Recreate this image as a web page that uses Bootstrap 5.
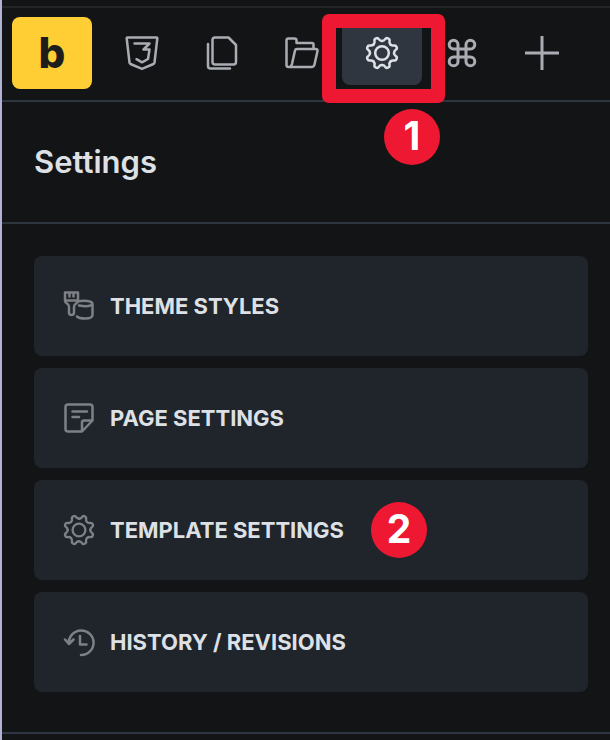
<!DOCTYPE html>
<html lang="en">
<head>
<meta charset="utf-8">
<meta name="viewport" content="width=device-width, initial-scale=1">
<title>Settings</title>
<link href="https://cdn.jsdelivr.net/npm/bootstrap@5.3.0/dist/css/bootstrap.min.css" rel="stylesheet">
<style>
  body { background: #131415; color: #dde1e5; font-family: Inter, "Liberation Sans", sans-serif; }
  .builder { border-left: 2px solid #b0b1d3; }
  .top-strip { height: 8px; border-bottom: 2px solid #242526; }
  .toolbar { padding: 9px 10px 11px; border-bottom: 2px solid #2d353e; }
  .brand { width: 80px; height: 72px; margin-right: 10px; border-radius: 8px; background: #ffcd34; color: #1d1d1b; font-size: 42px; font-weight: 800; line-height: 72px; }
  .tool { width: 80px; height: 64px; border-radius: 8px; color: #a9acb2; }
  .tool.active { background: #303640; color: #dde1e5; }
  .icon { fill: none; stroke: currentColor; stroke-width: 2.5; stroke-linecap: round; stroke-linejoin: round; overflow: visible; }
  .icon.heavy { stroke-width: 3; }
  .frame { inset: -7px -23px -18px -20px; border: 14px solid #ee1832; border-radius: 7px; z-index: 1; pointer-events: none; }
  .step { width: 56px; height: 56px; background: #ee1832; color: #fff; font-size: 39px; font-weight: 700; line-height: 54px; }
  .step-one { top: 88px; left: 42px; z-index: 2; }
  .heading { padding: 40px 32px; border-bottom: 2px solid #2d353e; }
  .heading h1 { font-size: 31px; font-weight: 600; line-height: 40px; }
  .options { padding: 32px 22px 40px 32px; gap: 12px; border-bottom: 2px solid #2f3542; }
  .option { height: 100px; padding: 0 29px; gap: 15px; border-radius: 8px; background: #20242b; color: #dde1e5; font-size: 22px; font-weight: 700; }
  .option .icon { color: #7d8186; }
  .option .step { margin-left: 12px; }
</style>
<script src="https://cdn.jsdelivr.net/npm/bootstrap@5.3.0/dist/js/bootstrap.bundle.min.js"></script>
</head>
<body>
<svg class="d-none" aria-hidden="true">
  <defs>
    <path id="tooth" d="M0-12C4.2-12 2.35-16.1 6.05-14.6C9.75-13.1 5.5-11.5 8.5-8.5"/>
    <symbol id="gear" viewBox="-17 -17 34 34" overflow="visible">
      <circle r="6.8"/>
      <use href="#tooth"/><use href="#tooth" transform="rotate(45)"/><use href="#tooth" transform="rotate(90)"/><use href="#tooth" transform="rotate(135)"/>
      <use href="#tooth" transform="rotate(180)"/><use href="#tooth" transform="rotate(225)"/><use href="#tooth" transform="rotate(270)"/><use href="#tooth" transform="rotate(315)"/>
    </symbol>
  </defs>
</svg>
<div class="builder min-vh-100">
  <div class="top-strip"></div>
  <header class="toolbar d-flex align-items-center">
    <a class="brand text-center text-decoration-none flex-shrink-0" href="#" aria-label="Builder home">b</a>
    <button class="tool btn border-0 p-0 d-flex align-items-center justify-content-center" aria-label="CSS">
      <svg class="icon" width="34" height="34"><path d="M2.500 1.500H31.500Q32.500 1.500 32.300 2.500L29.500 26.500Q29.500 27.500 28.500 28L17.500 32.700H16.500L5.500 28Q4.500 27.500 4.500 26.500L1.700 2.500Q1.500 1.500 2.500 1.500ZM9.500 7.500H24.500L18.500 13.500H24.500L23 23L17 26.300L11.500 23.200"/></svg>
    </button>
    <button class="tool btn border-0 p-0 d-flex align-items-center justify-content-center" aria-label="Pages">
      <svg class="icon" width="34" height="34"><path d="M10 1.500H23.500L31 9V26Q31 28.500 28.500 28.500H10Q7.500 28.500 7.500 26V4Q7.500 1.500 10 1.500ZM3 8V30Q3 32.500 5.500 32.500H25"/></svg>
    </button>
    <button class="tool btn border-0 p-0 d-flex align-items-center justify-content-center" aria-label="Open folder">
      <svg class="icon" width="34" height="34"><path d="M6 31H3.500Q1.500 31 1.500 29V4.500Q1.500 2.500 3.500 2.500H9.500Q11.500 2.500 11.500 4.500V7H27Q28.500 7 28.500 8.500V13M12 13H30.500Q32.900 13 32.500 15L29.500 28.500Q28.900 31 26.500 31H5.200Q6.500 30 7 28L10 14.500Q10.400 13 12 13Z"/></svg>
    </button>
    <div class="position-relative">
      <button class="tool active btn border-0 p-0 d-flex align-items-center justify-content-center" aria-label="Settings"><svg class="icon" width="34" height="34"><use href="#gear"/></svg></button>
      <div class="frame position-absolute"></div>
      <div class="step step-one position-absolute rounded-circle text-center">1</div>
    </div>
    <button class="tool btn border-0 p-0 d-flex align-items-center justify-content-center" aria-label="Shortcuts">
      <svg class="icon heavy" width="34" height="34" viewBox="-17 -17 34 34"><path d="M-4-4V-8.400A4.400 4.400 0 1 0-8.400-4H8.400A4.400 4.400 0 1 0 4-8.400V8.400A4.400 4.400 0 1 0 8.400 4H-8.400A4.400 4.400 0 1 0-4 8.400Z"/></svg>
    </button>
    <button class="tool btn border-0 p-0 d-flex align-items-center justify-content-center" aria-label="Add">
      <svg class="icon heavy" width="34" height="34"><path stroke-linecap="butt" d="M17 0V34M0 17H34"/></svg>
    </button>
  </header>
  <main>
    <div class="heading"><h1 class="m-0">Settings</h1></div>
    <div class="options d-flex flex-column">
      <button class="option btn border-0 d-flex align-items-center text-start">
        <svg class="icon" width="32" height="32"><path d="M2 2.500H15V10.500Q15 12.500 12.500 14Q11 15 11 17V22.500Q11 25 8.500 25T6 22.500V17Q6 15 4.500 14Q2 12.500 2 10.500ZM2 10.500H15M6.500 3V6.500M10.500 3V6.500M15 11.500Q19 10.500 24 11Q29.500 11.500 29.500 14V25Q29.500 28.500 22 28.500Q16 28.500 14 26.500M16 15.500Q27 17.500 29.500 14"/></svg>
        <span>THEME STYLES</span>
      </button>
      <button class="option btn border-0 d-flex align-items-center text-start">
        <svg class="icon" width="32" height="32"><path d="M5 2.500H27Q29.500 2.500 29.500 5V18.500L19 29.500H5Q2.500 29.500 2.500 27V5Q2.500 2.500 5 2.500ZM19 29V20.500Q19 18.500 21 18.500H29M9.500 9.500H24M9.500 15H16"/></svg>
        <span>PAGE SETTINGS</span>
      </button>
      <button class="option btn border-0 d-flex align-items-center text-start">
        <svg class="icon" width="32" height="32"><use href="#gear"/></svg>
        <span>TEMPLATE SETTINGS</span>
        <span class="step rounded-circle text-center">2</span>
      </button>
      <button class="option btn border-0 d-flex align-items-center text-start">
        <svg class="icon" width="32" height="32"><path d="M6 17.500A12.300 12.300 0 1 1 18 29M2 13.500L6 18L10.500 13.500M6 13.500V18M17 10V18.500H23.500"/></svg>
        <span>HISTORY / REVISIONS</span>
      </button>
    </div>
  </main>
</div>
</body>
</html>
